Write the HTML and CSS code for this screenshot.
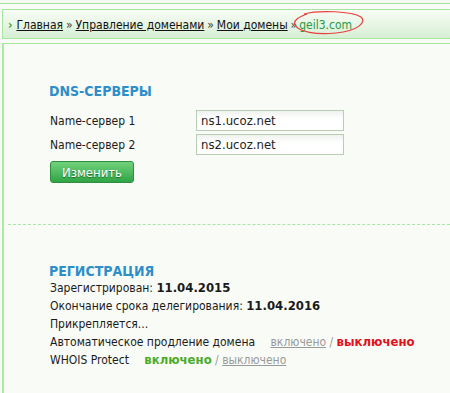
FILE: index.html
```html
<!DOCTYPE html>
<html lang="ru">
<head>
  <meta charset="UTF-8">
  <title>Мои домены — geil3.com</title>
  <link rel="stylesheet" href="styles.css">
</head>
<body>
<div class="topline"></div>
<div class="crumbs">
  <span class="arrow">›</span>
  <a href="#">Главная</a> <span class="sep">»</span>
  <a href="#">Управление доменами</a> <span class="sep">»</span>
  <a href="#">Мои домены</a> <span class="sep">»</span><span class="current">geil3.com<svg class="circle" width="72" height="26" viewBox="0 0 72 26">
      <path d="M10 4 C 24 0, 58 1, 67 7 C 73 12, 64 21, 42 23 C 22 25, 5 22, 1 15 C -1 10, 5 7, 13 4" fill="none" stroke="#e8403c" stroke-width="1.2"/>
    </svg></span>
</div>

<div class="panel">
  <div class="section">
    <h3>DNS-серверы</h3>
    <div class="row">
      <label>Name-сервер 1</label>
      <input value="ns1.ucoz.net">
    </div>
    <div class="row">
      <label>Name-сервер 2</label>
      <input value="ns2.ucoz.net">
    </div>
    <button>Изменить</button>
  </div>

  <div class="divider"></div>

  <div class="section reg">
    <h3>Регистрация</h3>
    <div class="line">Зарегистрирован: <b>11.04.2015</b></div>
    <div class="line">Окончание срока делегирования: <b>11.04.2016</b></div>
    <div class="line">Прикрепляется...</div>
    <div class="line">Автоматическое продление домена <span class="opts"><a href="#" class="off">включено</a> / <b class="red">выключено</b></span></div>
    <div class="line">WHOIS Protect <span class="opts"><b class="green">включено</b> / <a href="#" class="off">выключено</a></span></div>
  </div>
</div>
</body>
</html>
```

FILE: styles.css
```css
body {
  margin: 0;
  background: #f9fcf6;
  font-family: 'DejaVu Sans Condensed', 'Liberation Sans', sans-serif;
  font-size: 12px;
  color: #1a1a1a;
}
.topline {
  height: 3px;
  border-bottom: 1px solid #a8e0a4;
  background: #f3f9f0;
}
.crumbs {
  margin: 5px 0 0 2px;
  height: 28px;
  line-height: 31px;
  border: 1px solid #a8e6a0;
  border-right: none;
  background: linear-gradient(#f8fcf6, #d6efd4);
  padding-left: 5px;
  font-size: 12px;
  white-space: nowrap;
  word-spacing: -0.5px;
  overflow: visible;
}
.crumbs a {
  color: #111;
  word-spacing: 0;
}
.crumbs .arrow {
  color: #3aa33a;
  font-weight: bold;
  margin-right: 1px;
}
.crumbs .sep {
  color: #444;
}
.crumbs .current {
  color: #2a9848;
  position: relative;
  margin-left: 2px;
}
.crumbs .circle {
  position: absolute;
  left: -5px;
  top: -8px;
}
.panel {
  margin: 4px 0 0 2px;
  border-top: 1px solid #a8e6a0;
  border-left: 2px solid #a8eea0;
  background: #f9fcf6;
  height: 349px;
}
.section {
  padding: 39px 0 0 45px;
}
h3 {
  margin: 0 0 11px;
  color: #2d8ec9;
  font-size: 14px;
  text-transform: uppercase;
}
.row {
  display: flex;
  align-items: center;
  margin-bottom: 3px;
}
.row label {
  width: 146px;
  padding-left: 1px;
}
.row input {
  width: 139px;
  height: 15px;
  padding: 2px 3px 2px 4px;
  border: 1px solid #b9cdb2;
  background: linear-gradient(#eef2ed, #fff 40%);
  font: inherit;
  font-size: 13px;
  color: #222;
}
button {
  margin: 3px 0 0 1px;
  width: 84px;
  height: 22px;
  border: 1px solid #2f8e3e;
  border-radius: 3px;
  background: linear-gradient(#72d27c, #2fa445);
  color: #fff;
  font: inherit;
  font-size: 13px;
  text-shadow: 0 1px 1px #1d6a28;
}
.divider {
  margin: 41px 0 0 4px;
  border-top: 1px dashed #a8e6a8;
}
.reg {
  padding-top: 38px;
}
.reg h3 {
  margin-bottom: 0;
}
.line {
  height: 18px;
  line-height: 18px;
  padding-left: 1px;
  white-space: nowrap;
}
.line b {
  font-size: 13px;
}
.opts {
  margin-left: 12px;
  color: #999;
}
.opts .off {
  color: #999;
}
.opts .red {
  color: #e3101c;
}
.opts .green {
  color: #4aab2a;
}
```
